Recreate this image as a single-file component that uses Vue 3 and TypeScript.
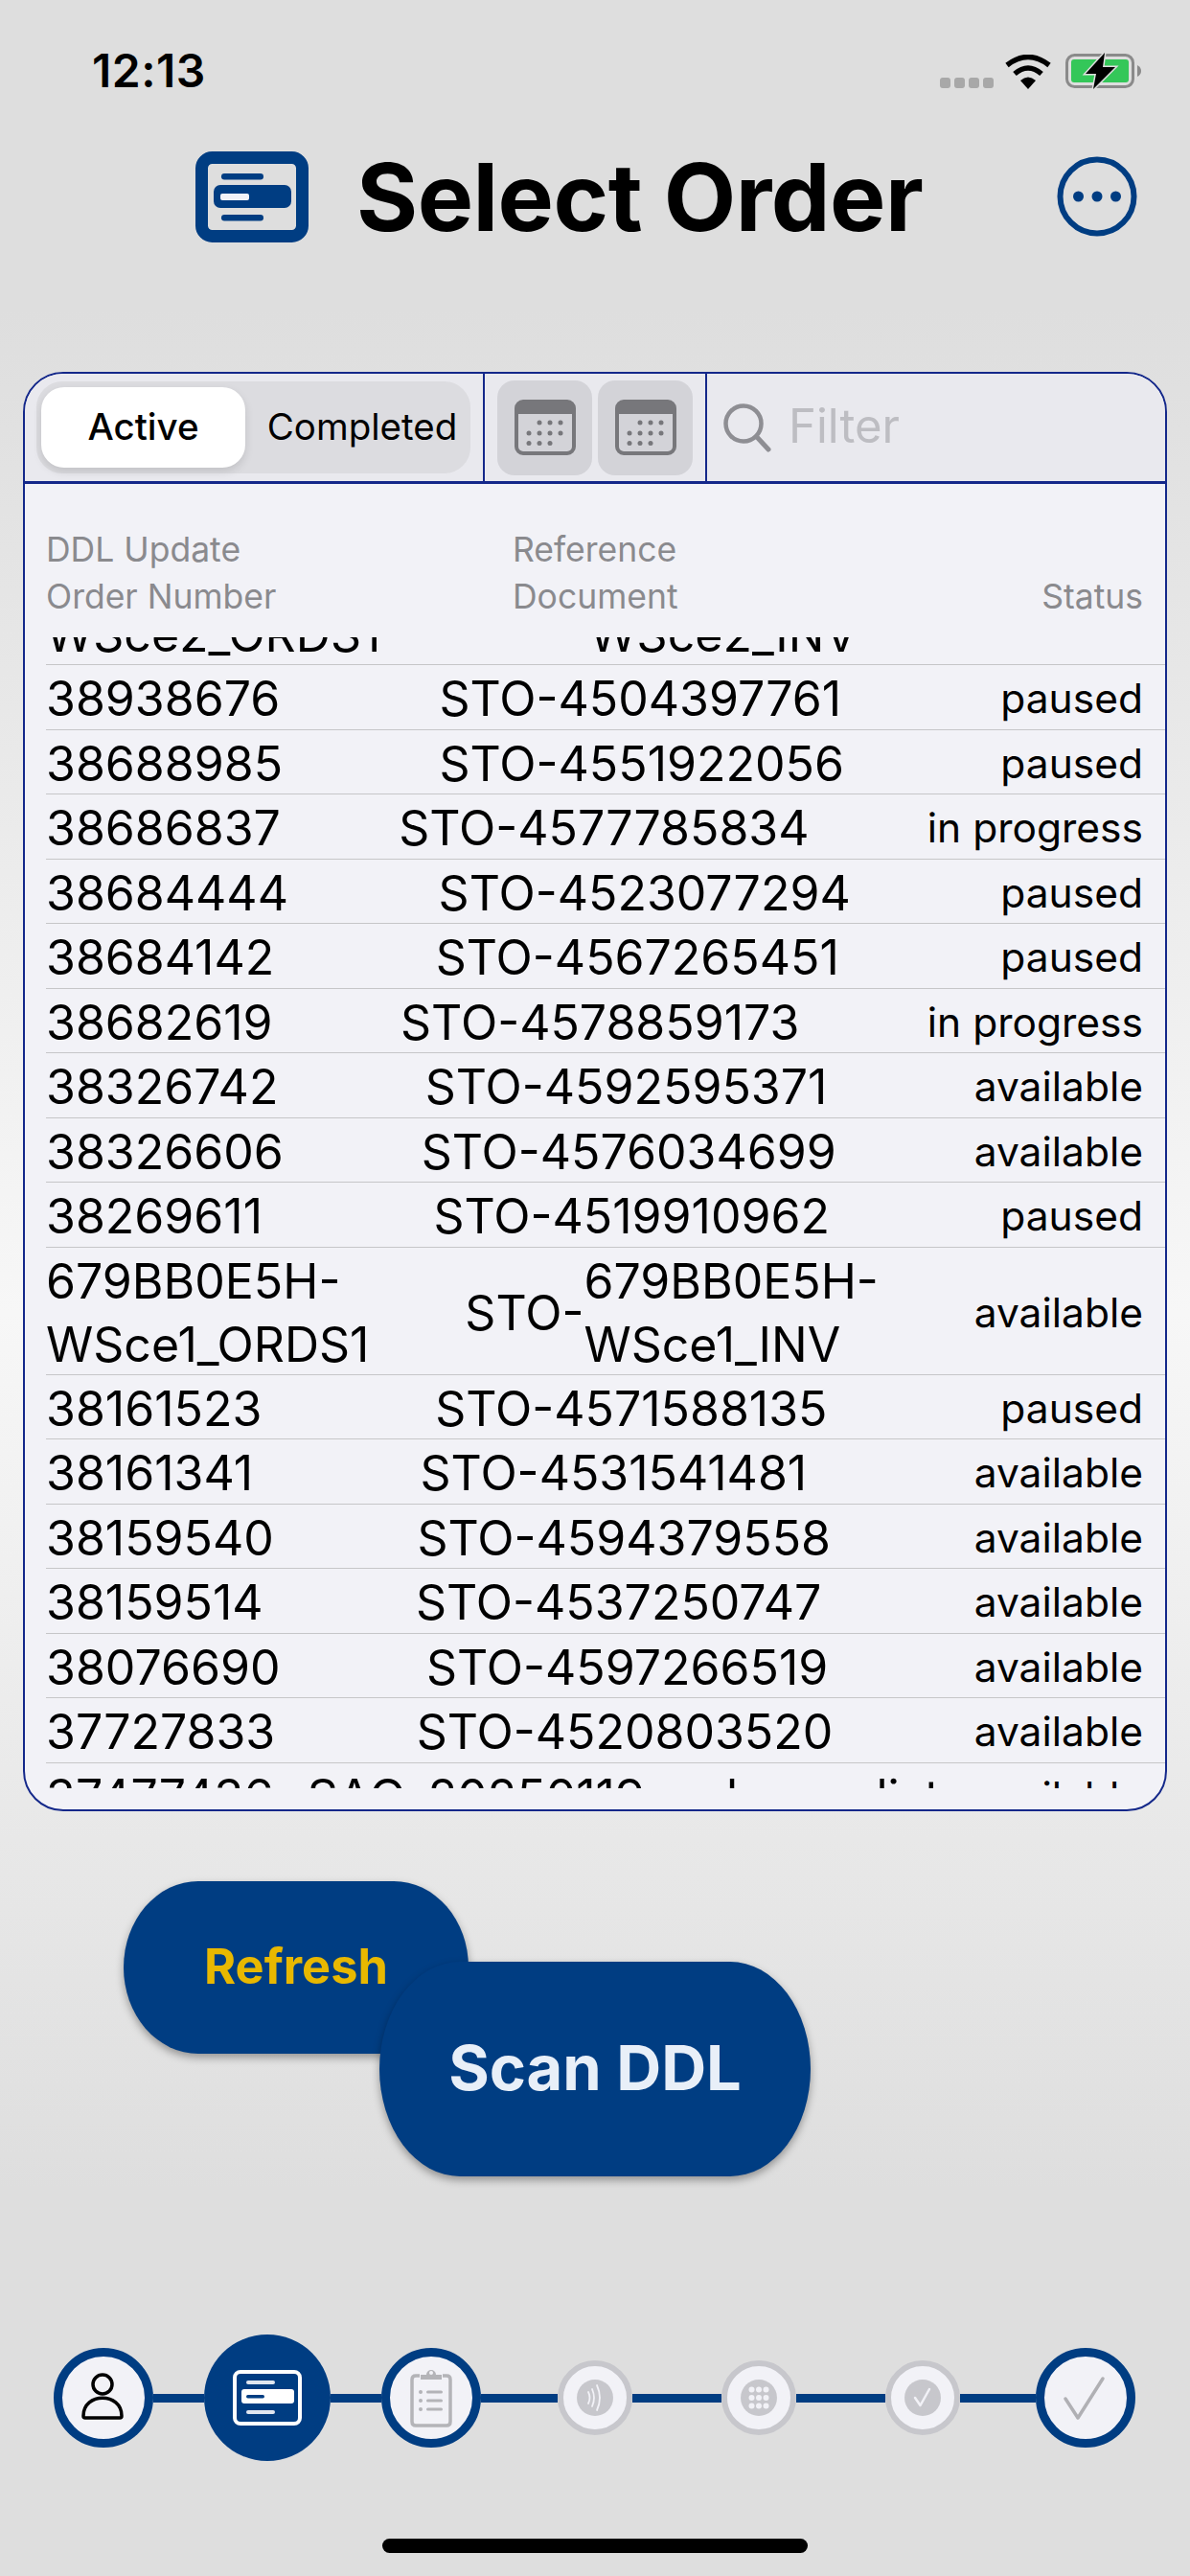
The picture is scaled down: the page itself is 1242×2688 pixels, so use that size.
<script setup lang="ts">
interface Row {
  order: string[]
  prefix: string
  ref: string[]
  status: string
}
const one = (order: string, ref: string, status: string): Row => ({
  order: [order],
  prefix: 'STO-',
  ref: [ref],
  status,
})
const rows: Row[] = [
  { order: ['679BB0E5H-', 'WSce2_ORDS1'], prefix: 'STO-', ref: ['679BB0E5H-', 'WSce2_INV'], status: 'available' },
  one('38938676', '4504397761', 'paused'),
  one('38688985', '4551922056', 'paused'),
  one('38686837', '4577785834', 'in progress'),
  one('38684444', '4523077294', 'paused'),
  one('38684142', '4567265451', 'paused'),
  one('38682619', '4578859173', 'in progress'),
  one('38326742', '4592595371', 'available'),
  one('38326606', '4576034699', 'available'),
  one('38269611', '4519910962', 'paused'),
  { order: ['679BB0E5H-', 'WSce1_ORDS1'], prefix: 'STO-', ref: ['679BB0E5H-', 'WSce1_INV'], status: 'available' },
  one('38161523', '4571588135', 'paused'),
  one('38161341', '4531541481', 'available'),
  one('38159540', '4594379558', 'available'),
  one('38159514', '4537250747', 'available'),
  one('38076690', '4597266519', 'available'),
  one('37727833', '4520803520', 'available'),
  { order: ['37477436'], prefix: 'SAO-', ref: ['20250119m_demo_dist'], status: 'available' },
]
const calendars = [0, 1]
const calDots = [
  [26, 24], [37, 24], [48, 24],
  [15, 35], [26, 35], [37, 35], [48, 35],
  [15, 45.5], [26, 45.5], [37, 45.5],
]
const keypad = [0, 1, 2].flatMap((y) => [0, 1, 2].map((x) => [x * 7.5 + 11.5, y * 8.5 + 10.5]))
</script>

<template>
  <div class="screen">
    <div class="status-bar">
      <span class="time">12:13</span>
      <div class="status-icons">
        <div class="signal"><i></i><i></i><i></i><i></i></div>
        <svg class="wifi" width="48" height="36" viewBox="0 0 48 36">
          <path d="M24 36 L16 27 Q24 20 32 27 Z" fill="#000" />
          <path d="M10 20 Q24 8 38 20" fill="none" stroke="#000" stroke-width="5.5" />
          <path d="M2 11 Q24 -6 46 11" fill="none" stroke="#000" stroke-width="5.5" />
        </svg>
        <svg class="battery" width="80" height="40" viewBox="0 0 80 40">
          <rect x="1.5" y="3.5" width="69" height="33" rx="8" fill="none" stroke="#8a8a8a" stroke-width="3" />
          <rect x="6" y="8" width="60" height="24" rx="3" fill="#34c759" />
          <path d="M75 14 Q79 16 79 20 Q79 24 75 26 Z" fill="#8a8a8a" />
          <path d="M41 1 L21 23 H32 L29 39 L52 16 H39 Z" fill="#000" stroke="#dedede" stroke-width="3" paint-order="stroke" />
        </svg>
      </div>
    </div>

    <header class="title-row">
      <svg class="title-icon" width="118" height="95" viewBox="0 0 118 95">
        <rect x="6.5" y="6.5" width="105" height="82" rx="11" fill="none" stroke="#003d82" stroke-width="13" />
        <rect x="27" y="23" width="44" height="6.5" rx="3.2" fill="#003d82" />
        <rect x="19" y="35" width="81" height="24" rx="7" fill="#003d82" />
        <rect x="26" y="44" width="30" height="7" rx="2" fill="#f2f2f7" />
        <rect x="27" y="66" width="44" height="6.5" rx="3.2" fill="#003d82" />
      </svg>
      <h1 class="title">Select Order</h1>
      <svg class="more" width="84" height="84" viewBox="0 0 84 84">
        <circle cx="42" cy="42" r="38.500" fill="none" stroke="#003d82" stroke-width="6" />
        <circle cx="22.500" cy="42" r="5.500" fill="#003d82" />
        <circle cx="42" cy="42" r="5.500" fill="#003d82" />
        <circle cx="61.500" cy="42" r="5.500" fill="#003d82" />
      </svg>
    </header>

    <section class="card">
      <div class="toolbar">
        <div class="tool tool-seg">
          <div class="segmented">
            <span class="seg seg-on">Active</span>
            <span class="seg seg-off">Completed</span>
          </div>
        </div>
        <div class="tool tool-cal">
          <button v-for="c in calendars" :key="c" class="cal-btn">
            <svg width="64" height="58" viewBox="0 0 64 58">
              <rect x="2" y="2" width="60" height="54" rx="7" fill="#d3d3d8" stroke="#77777b" stroke-width="4" />
              <path d="M2 15 V9 Q2 2 9 2 H55 Q62 2 62 9 V15 Z" fill="#77777b" />
              <circle v-for="(d, i) in calDots" :key="i" :cx="d[0]" :cy="d[1]" r="2.500" fill="#77777b" />
            </svg>
          </button>
        </div>
        <div class="tool tool-filter">
          <svg width="50" height="52" viewBox="0 0 50 52">
            <circle cx="21" cy="22" r="18.500" fill="none" stroke="#8e8e93" stroke-width="4.500" />
            <path d="M34.500 35.500 L47 49" stroke="#8e8e93" stroke-width="5" stroke-linecap="round" />
          </svg>
          <span class="filter-text">Filter</span>
        </div>
      </div>

      <div class="table-head">
        <div>DDL Update<br />Order Number</div>
        <div>Reference<br />Document</div>
        <div class="head-status">Status</div>
      </div>

      <div class="viewport">
        <div class="rows">
          <div v-for="(r, i) in rows" :key="i" class="row">
            <div class="cell-order">
              <div v-for="line in r.order" :key="line">{{ line }}</div>
            </div>
            <div class="cell-ref">
              <span>{{ r.prefix }}</span>
              <div>
                <div v-for="line in r.ref" :key="line">{{ line }}</div>
              </div>
            </div>
            <div class="cell-status">{{ r.status }}</div>
          </div>
        </div>
      </div>
    </section>

    <div class="actions">
      <button class="btn btn-refresh">Refresh</button>
      <button class="btn btn-scan">Scan DDL</button>
    </div>

    <nav class="stepper">
      <div class="step step-big">
        <svg width="50" height="56" viewBox="0 0 50 56">
          <circle cx="24" cy="14" r="10" fill="none" stroke="#000" stroke-width="3.500" />
          <path d="M4 47 C4 22 44 22 44 47 Q44 49 42 49 H6 Q4 49 4 47 Z" fill="none" stroke="#000" stroke-width="3.500" />
        </svg>
      </div>
      <div class="line line-s"></div>
      <div class="step step-active">
        <svg width="74" height="60" viewBox="0 0 74 60">
          <rect x="3" y="3" width="68" height="54" rx="6" fill="none" stroke="#fff" stroke-width="4" />
          <rect x="15" y="12" width="30" height="4" rx="2" fill="#dfe6f0" />
          <rect x="10" y="21" width="55" height="15" rx="3" fill="#fff" />
          <rect x="15" y="27" width="19" height="3.500" rx="1.700" fill="#003d82" />
          <rect x="15" y="43" width="30" height="4" rx="2" fill="#dfe6f0" />
        </svg>
      </div>
      <div class="line line-s"></div>
      <div class="step step-big">
        <svg width="44" height="62" viewBox="0 0 44 62">
          <path d="M10 8 H6 Q2 8 2 12 V56 Q2 60 6 60 H38 Q42 60 42 56 V12 Q42 8 38 8 H34" fill="none" stroke="#b4b4b8" stroke-width="3.500" />
          <path d="M11 12 V7 H17 A5 5 0 0 1 27 7 H33 V12 Z" fill="#b4b4b8" />
          <circle cx="22" cy="5" r="2" fill="#f2f2f7" />
          <g fill="#b4b4b8">
            <circle cx="11" cy="25" r="2" />
            <circle cx="11" cy="34" r="2" />
            <circle cx="11" cy="43" r="2" />
            <rect x="17" y="23.500" width="17" height="3" rx="1.500" />
            <rect x="17" y="32.500" width="17" height="3" rx="1.500" />
            <rect x="17" y="41.500" width="17" height="3" rx="1.500" />
          </g>
        </svg>
      </div>
      <div class="line line-m"></div>
      <div class="step step-small">
        <div class="disc">
          <svg width="38" height="38" viewBox="0 0 38 38">
            <g fill="none" stroke="#f2f2f7" stroke-width="1.800" stroke-linecap="round">
              <path d="M12 13 Q15 19 12 25" />
              <path d="M16 10 Q20 19 16 28" />
              <path d="M21 6 Q27 19 21 32" />
            </g>
          </svg>
        </div>
      </div>
      <div class="line line-l"></div>
      <div class="step step-small">
        <div class="disc">
          <svg width="38" height="38" viewBox="0 0 38 38">
            <circle v-for="(k, i) in keypad" :key="i" :cx="k[0]" :cy="k[1]" r="3" fill="#f2f2f7" />
          </svg>
        </div>
      </div>
      <div class="line line-l"></div>
      <div class="step step-small">
        <div class="disc">
          <svg width="38" height="38" viewBox="0 0 38 38">
            <path d="M11 19 L16.500 27 L26 10" fill="none" stroke="#f2f2f7" stroke-width="2.500" stroke-linecap="round" stroke-linejoin="round" />
          </svg>
        </div>
      </div>
      <div class="line line-m2"></div>
      <div class="step step-big">
        <svg width="52" height="52" viewBox="0 0 52 52">
          <path d="M5 27 L18 47 L44 6" fill="none" stroke="#b0b0b4" stroke-width="3.500" stroke-linecap="round" stroke-linejoin="round" />
        </svg>
      </div>
    </nav>

    <div class="home"></div>
  </div>
</template>

<style>
html, body { margin: 0; padding: 0; }
</style>

<style scoped>
.screen {
  width: 1242px;
  height: 2688px;
  overflow: hidden;
  display: flex;
  flex-direction: column;
  font-family: Inter, "Liberation Sans", sans-serif;
  color: #000;
  background: linear-gradient(180deg, #dedede 0%, #dedede 12%, #f7f7f7 51%, #dedede 85%, #dedede 100%);
}
.status-bar {
  height: 158px;
  flex: none;
  box-sizing: border-box;
  padding: 50px 50px 0 96px;
  display: flex;
  justify-content: space-between;
  align-items: flex-start;
}
.time { font-size: 48px; font-weight: 600; line-height: 48px; letter-spacing: 0.5px; }
.status-icons { display: flex; align-items: flex-end; margin-top: 4px; }
.signal { display: flex; gap: 4px; margin-right: 12px; margin-bottom: 1px; }
.signal i { display: block; width: 11px; height: 11px; border-radius: 3px; background: #a8a8a8; }
.wifi { margin-right: 15px; }
.battery { margin-bottom: -1px; }

.title-row {
  position: relative;
  height: 95px;
  flex: none;
  padding-left: 204px;
  display: flex;
  align-items: center;
}
.title-icon { flex: none; }
.title {
  margin: 0 0 0 50px;
  font-size: 98px;
  font-weight: 700;
  line-height: 95px;
  letter-spacing: -0.5px;
}
.more { position: absolute; left: 1103px; top: 5px; }

.card {
  margin: 135px 0 0 24px;
  width: 1194px;
  height: 1502px;
  flex: none;
  box-sizing: border-box;
  border: 2px solid #14288a;
  border-radius: 42px;
  background: #f2f2f7;
  overflow: hidden;
  display: flex;
  flex-direction: column;
}
.toolbar {
  height: 115px;
  flex: none;
  box-sizing: border-box;
  display: flex;
  background: #e9e9ee;
  border-bottom: 3px solid #14288a;
}
.tool { display: flex; align-items: center; box-sizing: border-box; }
.tool-seg { width: 480px; padding-left: 12px; border-right: 2px solid #14288a; }
.tool-cal { width: 232px; padding-left: 13px; gap: 6px; border-right: 2px solid #14288a; }
.tool-filter { flex: 1; padding-left: 17px; gap: 18px; }
.segmented {
  width: 453px;
  height: 96px;
  box-sizing: border-box;
  padding: 6px 5px;
  border-radius: 27px;
  background: #dcdce0;
  display: flex;
  align-items: center;
}
.seg {
  flex: 1;
  height: 84px;
  box-sizing: border-box;
  padding-bottom: 2px;
  display: flex;
  align-items: center;
  justify-content: center;
  font-size: 38.5px;
  white-space: nowrap;
}
.seg-off { padding-left: 14px; }
.seg-on {
  flex: none;
  width: 213px;
  background: #fff;
  border-radius: 24px;
  font-weight: 500;
  box-shadow: 0 4px 10px rgba(0, 0, 0, 0.12);
}
.cal-btn {
  width: 99px;
  height: 99px;
  padding: 0;
  border: 0;
  border-radius: 18px;
  background: #d3d3d8;
  display: flex;
  align-items: center;
  justify-content: center;
}
.filter-text { font-size: 49px; color: #bdbdc2; line-height: 52px; margin-bottom: 2px; }

.table-head {
  height: 160px;
  flex: none;
  box-sizing: border-box;
  padding: 44px 23px 0 22px;
  display: grid;
  grid-template-columns: 487px 1fr auto;
  font-size: 35.5px;
  line-height: 49px;
  color: #8a8a8e;
}
.head-status { align-self: start; margin-top: 49px; }
.viewport { height: 1201px; flex: none; overflow: hidden; }
.rows { margin-top: -104px; padding-left: 22px; }
.row {
  box-sizing: border-box;
  min-height: 67.5px;
  padding-right: 23px;
  display: flex;
  justify-content: space-between;
  align-items: center;
  border-bottom: 1.500px solid #c6c6c8;
  font-size: 50px;
  line-height: 66px;
  white-space: nowrap;
}
.cell-order, .cell-ref, .cell-status { margin: 2px 0 -2px; }
.cell-ref { display: flex; align-items: center; }
.cell-status { font-size: 42.5px; }

.actions {
  margin: 73px 0 0 129px;
  display: flex;
  align-items: flex-start;
  flex: none;
}
.btn {
  flex: none;
  padding: 0 0 3px;
  border: 0;
  background: #003d82;
  font-family: inherit;
  font-weight: 700;
  box-shadow: 0 4px 8px rgba(0, 0, 0, 0.35);
}
.btn-refresh {
  width: 360px;
  height: 180px;
  border-radius: 78px / 90px;
  color: #e8b800;
  font-size: 50.5px;
}
.btn-scan {
  width: 450px;
  height: 224px;
  margin: 84px 0 0 -93px;
  border-radius: 84px / 112px;
  color: #e8eff8;
  font-size: 65px;
}

.stepper {
  margin: 165px 0 0 56px;
  height: 132px;
  flex: none;
  display: flex;
  align-items: center;
}
.step {
  flex: none;
  box-sizing: border-box;
  border-radius: 50%;
  display: flex;
  align-items: center;
  justify-content: center;
}
.step-big { width: 104px; height: 104px; background: #f2f2f7; border: 9px solid #003d82; }
.step-active { width: 132px; height: 132px; background: #003d82; }
.step-small { width: 78px; height: 78px; background: #f2f2f7; border: 6px solid #c7c7cc; }
.disc {
  width: 38px;
  height: 38px;
  border-radius: 50%;
  background: #c7c7cc;
}
.disc svg { display: block; }
.line { height: 9px; flex: none; background: #003d82; }
.line-s { width: 53px; }
.line-m { width: 80px; }
.line-m2 { width: 79px; }
.line-l { width: 93px; }

.home {
  margin: 81px 0 0 399px;
  width: 444px;
  height: 15px;
  flex: none;
  border-radius: 8px;
  background: #000;
}
</style>
